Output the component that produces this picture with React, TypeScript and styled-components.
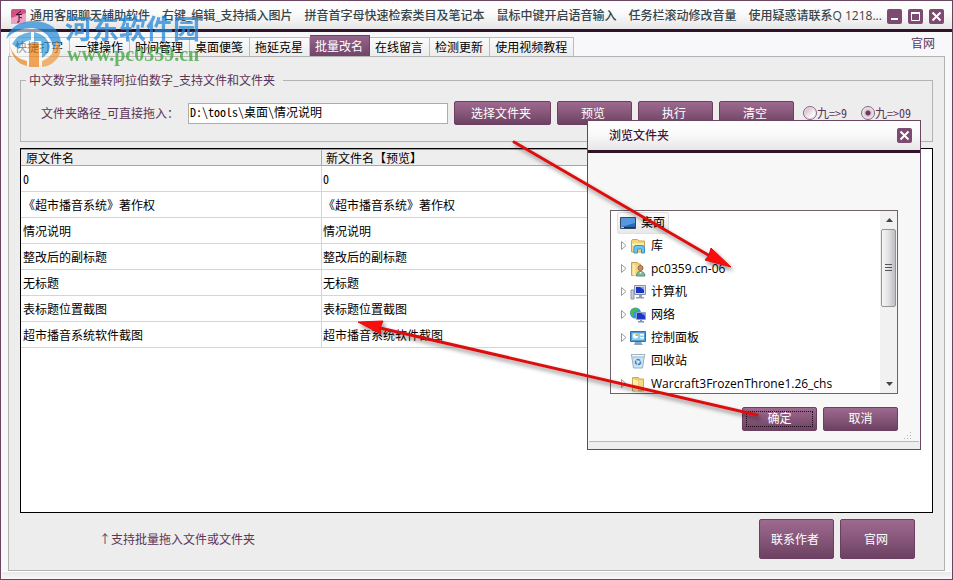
import React, { useState } from "react";
import styled, { createGlobalStyle, css } from "styled-components";

const pixelFont = `"Noto Sans Mono CJK SC", "Noto Sans CJK SC", sans-serif`;
const uiFont = `"Open Sans", "Noto Sans CJK SC", sans-serif`;
const plum = "#5c3455";
const frame = "#6b4660";

const GlobalStyle = createGlobalStyle`
  *, *::before, *::after { box-sizing: border-box; }
  body { margin: 0; font: 12px/14px ${pixelFont}; color: #000; }
  button, input { font: inherit; color: inherit; margin: 0; }
`;

const Window = styled.div`
  position: relative;
  display: flex;
  flex-direction: column;
  min-height: 100vh;
  border: 1px solid ${frame};
  background: #f8f7f9;
  overflow: hidden;
`;

const TitleBar = styled.header`
  display: flex;
  align-items: center;
  gap: 6px;
  height: 31px;
  padding: 2px 8px 0 10px;
  border-bottom: 3px solid #301329;
  background: linear-gradient(#ffffff, #fafafa 45%, #e6e6e6);
`;

const Title = styled.h1`
  flex: 1;
  min-width: 0;
  margin: 0 -5px 0 -2px;
  font: 500 12px/18px ${uiFont};
  color: #35454c;
  white-space: pre;
`;

const CaptionButton = styled.button`
  display: flex;
  flex: none;
  width: 15px;
  height: 15px;
  padding: 0;
  border: 0;
  border-radius: 2px;
  background: #7d4b72;
`;

const Nav = styled.div`
  display: flex;
  align-items: flex-end;
  justify-content: space-between;
  height: 24px;
  padding: 0 17px 0 8px;
`;

const Tabs = styled.div`
  display: flex;
  align-items: flex-end;
`;

const Tab = styled.button<{ $active?: boolean }>`
  height: 19px;
  padding: 0 6px 0 5px;
  border: 1px solid #bdbdbd;
  border-width: 1px 1px 0 0;
  background: linear-gradient(#fbfbfb, #ececec);
  line-height: 16px;
  &:first-child { border-left-width: 1px; }
  ${(p) =>
    p.$active &&
    css`
      height: 21px;
      border-color: #6c4261;
      background: linear-gradient(#95658b, #714468);
      color: #fff;
      line-height: 18px;
    `}
`;

const SiteLink = styled.a`
  align-self: flex-start;
  margin-top: 4px;
  color: ${plum};
  text-decoration: none;
`;

const Panel = styled.main`
  display: flex;
  flex: 1;
  flex-direction: column;
  margin: 0 7px 0 7px;
  padding: 16px 11px 11px;
  border: 1px solid #b3b3b3;
  background: #ededed;
`;

const Group = styled.fieldset`
  min-width: 0;
  margin: 0;
  padding: 14px 10px 16px 20px;
  border: 1px solid #b3b3b3;
`;

const Legend = styled.legend`
  margin-left: -15px;
  padding: 0 8px 0 3px;
  color: ${plum};
`;

const Controls = styled.div`
  display: flex;
  align-items: center;
  gap: 6px;
`;

const PathLabel = styled.label`
  flex: none;
  width: 141px;
  color: ${plum};
  white-space: nowrap;
`;

const PathInput = styled.input`
  flex: 0 1 260px;
  min-width: 0;
  height: 21px;
  padding: 0 2px 3px 1px;
  border: 1px solid #adadad;
  background: #fff;
`;

const ActionButton = styled.button<{ $wide?: boolean; $tall?: boolean; $focused?: boolean }>`
  flex: none;
  width: ${(p) => (p.$wide ? 97 : 75)}px;
  height: ${(p) => (p.$tall ? 40 : 24)}px;
  padding: 0 3px 0 0;
  border: 1px solid #6a3f60;
  border-radius: 2px;
  background: linear-gradient(#9e698f, #89597c 45%, #6c4162);
  color: #fff;
  ${(p) =>
    p.$focused &&
    css`
      outline: 1px dotted #1c0918;
      outline-offset: -5px;
    `}
`;

const DialogButton = styled(ActionButton)`
  padding: 0;
`;

const Radios = styled.div`
  display: flex;
  gap: 14px;
  margin-left: 3px;
`;

const RadioLabel = styled.label`
  display: flex;
  align-items: center;
  color: ${plum};
  white-space: nowrap;
`;

const Radio = styled.input`
  appearance: none;
  width: 14px;
  height: 14px;
  border: 1px solid #7e6b79;
  border-radius: 50%;
  background: linear-gradient(135deg, #c9a9c1, #fff 75%);
  box-shadow: inset 0 0 0 1px #eee3eb;
  &:checked {
    background: radial-gradient(circle, #6b3a5e 0 2px, #d9c3d2 3px, #f4ecf2 6px);
  }
`;

const ListBox = styled.div`
  flex: 1;
  margin-top: 6px;
  border: 1px solid #000;
  background: #fff;
`;

const FileTable = styled.table`
  width: 600px;
  table-layout: fixed;
  border-collapse: separate;
  border-spacing: 0;
`;

const HeadCell = styled.th`
  height: 17px;
  padding: 2px 0 0 5px;
  border-bottom: 1px solid #a6a6a6;
  background: #eee;
  box-shadow: inset 0 1px #9c9c9c;
  font-weight: 400;
  text-align: left;
  & + & { border-left: 1px solid #a6a6a6; padding-left: 4px; }
`;

const Cell = styled.td`
  height: 26px;
  padding: 1px 0 0 2px;
  border-bottom: 1px solid #d5d5d5;
  & + & { border-left: 1px solid #d5d5d5; padding-left: 1px; }
`;

const Footer = styled.footer`
  display: flex;
  align-items: center;
  gap: 6px;
  margin-top: 6px;
  padding: 0 18px 0 79px;
`;

const Hint = styled.p`
  flex: 1;
  margin: 0;
  color: ${plum};
`;

const StatusBar = styled.div`
  height: 8px;
  margin: 0 1px;
  border-top: 1px solid #fff;
  background: linear-gradient(#eaeaea, #f9f6f9);
`;

const Dialog = styled.section`
  position: absolute;
  top: 119px;
  right: 31px;
  display: flex;
  flex-direction: column;
  width: 334px;
  border: 1px solid ${frame};
  background: #f7f7f7;
  font: 12px/16px ${uiFont};
`;

const DialogBar = styled.div`
  display: flex;
  align-items: center;
  justify-content: space-between;
  height: 32px;
  padding: 0 8px 0 21px;
  border-bottom: 3px solid #301329;
  background: linear-gradient(#ffffff, #fafafa 45%, #e6e6e6);
`;

const DialogTitle = styled.h2`
  margin: 0;
  font: 500 12px/16px ${uiFont};
  color: #3f1737;
`;

const DialogBody = styled.div`
  padding: 57px 22px 0;
`;

const TreeBox = styled.div`
  display: flex;
  height: 184px;
  border: 1px solid #6e626b;
  background: #fff;
  overflow: hidden;
`;

const TreeList = styled.ul`
  flex: 1;
  margin: 0;
  padding: 0;
  list-style: none;
`;

const TreeRow = styled.li<{ $root?: boolean }>`
  display: flex;
  align-items: center;
  gap: 3px;
  height: 23px;
  padding-left: ${(p) => (p.$root ? 6 : 10)}px;
`;

const Expander = styled.svg`
  flex: none;
  width: 6px;
  height: 9px;
`;

const TreeIcon = styled.svg`
  flex: none;
  width: 16px;
  height: 16px;
`;

const TreeName = styled.span`
  padding-left: 2px;
  white-space: nowrap;
`;

const RootItem = styled.div`
  display: flex;
  align-items: center;
  gap: 3px;
  height: 22px;
  padding: 0 3px 0 2px;
  border: 1px solid #e0e0e0;
  border-radius: 2px;
  background: linear-gradient(#fafafa, #e9e9e9);
`;

const ScrollTrack = styled.div`
  display: flex;
  flex-direction: column;
  align-items: center;
  width: 17px;
  background: #f1f1f1;
`;

const ScrollArrow = styled.svg`
  flex: none;
  width: 16px;
  height: 18px;
`;

const ScrollThumb = styled.div`
  display: flex;
  align-items: center;
  justify-content: center;
  width: 15px;
  height: 78px;
  margin-bottom: auto;
  border: 1px solid #959595;
  border-radius: 2px;
  background: linear-gradient(90deg, #f6f6f6, #e4e4e4 45%, #bdbec2);
`;

const DialogActions = styled.div`
  display: flex;
  justify-content: flex-end;
  gap: 6px;
  padding-top: 13px;
`;

const DialogStatus = styled.div`
  display: flex;
  justify-content: flex-end;
  height: 11px;
  margin: 0 1px;
  padding-right: 6px;
  border-bottom: 1px solid #bbb;
`;

const DialogEdge = styled.div`
  height: 7px;
  background: #eee;
`;

const Arrows = styled.svg`
  position: absolute;
  top: -1px;
  right: -1px;
  width: 953px;
  height: 580px;
  pointer-events: none;
`;

const Watermark = styled.div`
  position: absolute;
  top: 9px;
  left: 3px;
  display: flex;
  gap: 1px;
  opacity: 0.74;
  pointer-events: none;
`;

const WatermarkText = styled.div`
  display: flex;
  flex-direction: column;
  padding-top: 3px;
  white-space: nowrap;
`;

const WatermarkName = styled.span`
  font: 700 27px/30px "Noto Sans CJK SC", sans-serif;
  color: #2387d8;
`;

const WatermarkSite = styled.span`
  padding-left: 2px;
  font: 700 20px/23px "Liberation Serif", serif;
  color: #3ca53c;
`;

const tabs = ["快捷打字", "一键操作", "时间管理", "桌面便笺", "拖延克星", "批量改名", "在线留言", "检测更新", "使用视频教程"];

const files = ["0", "《超市播音系统》著作权", "情况说明", "整改后的副标题", "无标题", "表标题位置截图", "超市播音系统软件截图"];

type IconKind = "desktop" | "library" | "user" | "computer" | "network" | "control" | "bin" | "folder";

const iconArt: Record<IconKind, React.ReactNode> = {
  desktop: (
    <>
      <path d="M0.5 2.5h15v11h-15z" fill="#2868b4" stroke="#36485c" />
      <path d="M1 3h14v5L1 12z" fill="#5698dc" />
      <path d="M1 12h14v1H1z" fill="#1b3858" />
      <path d="M1 12h3v1H1z" fill="#9ed7f4" />
    </>
  ),
  library: (
    <>
      <path d="M1.5 3l1-1.5h5L9 3h5.5v11h-13z" fill="#f3d77b" stroke="#cba549" />
      <path d="M2 5.5h12v2H2z" fill="#fff1b8" />
      <path d="M4 15V9.500q0-2 2-2h6q2.500 0 2.500 2.500v5h-3v-4h-4v4z" fill="#6cc4ec" stroke="#3993c9" />
    </>
  ),
  user: (
    <>
      <path d="M1.5 1.500h6l1 1.500h2v11.500h-9z" fill="#f0d37c" stroke="#c8a24c" />
      <path d="M2.500 3v11l3 1.500V4.500z" fill="#fbe9a7" />
      <circle cx="10.500" cy="7" r="2.500" fill="#c58e68" stroke="#93684a" />
      <path d="M6.500 15q0-4.500 4-4.500t4.500 4.500z" fill="#7fbc9c" stroke="#588d78" />
      <path d="M9.500 11l1 2 1-2z" fill="#fff" />
    </>
  ),
  computer: (
    <>
      <path d="M1 6h3v9H1z" fill="#c9ced6" stroke="#8b95a3" />
      <path d="M4.500 1.500h11v9h-11z" fill="#d5dbe8" stroke="#8792a8" />
      <path d="M6 3h8v6H6z" fill="#1c35c4" />
      <path d="M10 3h4v3z" fill="#7ba2f4" />
      <path d="M9 11h3v2h2v1.500H6V13h3z" fill="#939eb0" />
    </>
  ),
  network: (
    <>
      <circle cx="5.500" cy="6" r="5.500" fill="#3297dc" />
      <path d="M2 2q4-2 6 0L6 5 3 5 4 8 2 9 0 5zM6 7l3 1-3 3z" fill="#46ba4c" />
      <path d="M6.500 5.500h9v7h-9z" fill="#1c35c4" stroke="#8ea2c4" />
      <path d="M11 6h4v3z" fill="#6c93f1" />
      <path d="M10 13h2v1h2v1.500H8V14h2z" fill="#8290aa" />
    </>
  ),
  control: (
    <>
      <path d="M0.500 1.500h15v10h-15z" fill="#4e9fd5" stroke="#386f9f" />
      <path d="M2 3h12v7H2z" fill="#8fcdec" />
      <circle cx="5.500" cy="6" r="2.500" fill="#fff" />
      <path d="M5.500 6V3.500A2.500 2.500 0 0 1 8 6z" fill="#e0ad35" />
      <path d="M10 4h4v1.500h-4zM10 7h4v1.500h-4z" fill="#fff" />
      <path d="M5 12h6l2 3H4z" fill="#8ba6bc" />
    </>
  ),
  bin: (
    <>
      <path d="M1.500 2l2 13h9l2-13z" fill="#cfe3f0" stroke="#94b1c7" />
      <path d="M1 1.500h14l-1 2.500H2z" fill="#edf6fb" stroke="#9db8ca" />
      <circle cx="8" cy="9" r="2.500" fill="none" stroke="#397fc3" strokeWidth="1.500" strokeDasharray="4 1" />
    </>
  ),
  folder: (
    <>
      <path d="M2.500 1.500h6l1 1.500h4v12h-11z" fill="#edcd70" stroke="#cfaa52" />
      <path d="M3 3l5 2v11l-5-2z" fill="#fff0ae" />
      <path d="M9 4h4v10H9z" fill="#f6dc87" />
    </>
  ),
};

const entries: { name: string; icon: IconKind; leaf?: boolean }[] = [
  { name: "库", icon: "library" },
  { name: "pc0359.cn-06", icon: "user" },
  { name: "计算机", icon: "computer" },
  { name: "网络", icon: "network" },
  { name: "控制面板", icon: "control" },
  { name: "回收站", icon: "bin", leaf: true },
  { name: "Warcraft3FrozenThrone1.26_chs", icon: "folder" },
];

function Glyph({ kind }: { kind: "min" | "max" | "close" }) {
  return (
    <svg width="15" height="15" viewBox="0 0 15 15" fill="none" stroke="#fff" strokeWidth="2">
      {kind === "min" && <path d="M4 10h7" />}
      {kind === "max" && (
        <>
          <path d="M3.500 4v7.500h8V4" strokeWidth="1" />
          <path d="M3 4h9" />
        </>
      )}
      {kind === "close" && <path d="M3.500 3.500l8 8M11.500 3.500l-8 8" />}
    </svg>
  );
}

function FolderDialog() {
  return (
    <Dialog role="dialog" aria-labelledby="dialog-title">
      <DialogBar>
        <DialogTitle id="dialog-title">浏览文件夹</DialogTitle>
        <CaptionButton aria-label="关闭对话框">
          <Glyph kind="close" />
        </CaptionButton>
      </DialogBar>
      <DialogBody>
        <TreeBox>
          <TreeList>
            <TreeRow $root>
              <RootItem>
                <TreeIcon viewBox="0 0 16 16">{iconArt.desktop}</TreeIcon>
                <TreeName>桌面</TreeName>
              </RootItem>
            </TreeRow>
            {entries.map((e) => (
              <TreeRow key={e.name}>
                <Expander viewBox="0 0 6 9">
                  {!e.leaf && <path d="M0.500 0.500v8L5 4.500z" fill="#fff" stroke="#999" />}
                </Expander>
                <TreeIcon viewBox="0 0 16 16">{iconArt[e.icon]}</TreeIcon>
                <TreeName>{e.name}</TreeName>
              </TreeRow>
            ))}
          </TreeList>
          <ScrollTrack>
            <ScrollArrow viewBox="0 0 16 18">
              <path d="M5 11h7L8.500 7z" fill="#444" />
            </ScrollArrow>
            <ScrollThumb>
              <svg width="7" height="9" stroke="#555">
                <path d="M0 0.500h7M0 3.500h7M0 6.500h7" />
              </svg>
            </ScrollThumb>
            <ScrollArrow viewBox="0 0 16 18">
              <path d="M5 7h7L8.500 11z" fill="#444" />
            </ScrollArrow>
          </ScrollTrack>
        </TreeBox>
        <DialogActions>
          <DialogButton $focused>确定</DialogButton>
          <DialogButton>取消</DialogButton>
        </DialogActions>
      </DialogBody>
      <DialogStatus>
        <svg width="10" height="10" fill="#b5b5b5">
          <path d="M7 1h1v1H7zM4 4h1v1H4zM7 4h1v1H7zM1 7h1v1H1zM4 7h1v1H4zM7 7h1v1H7z" />
        </svg>
      </DialogStatus>
      <DialogEdge />
    </Dialog>
  );
}

export default function App() {
  const [path, setPath] = useState("D:\\tools\\桌面\\情况说明");
  const [mode, setMode] = useState("09");
  return (
    <Window>
      <GlobalStyle />
      <TitleBar>
        <svg width="15" height="15" viewBox="0 0 15 15">
          <rect width="15" height="15" rx="2" fill="#d84f86" />
          <path d="M0 15V9L15 4v11z" fill="#eda0c0" />
          <path d="M10 2L6 5M5 5.500h6M8 5.500V13H6M8 8l3 1" fill="none" stroke="#46152f" />
        </svg>
        <Title>
          通用客服聊天辅助软件　右键_编辑_支持插入图片　拼音首字母快速检索类目及笔记本　鼠标中键开启语音输入　任务栏滚动修改音量　使用疑惑请联系Q 1218...
        </Title>
        <CaptionButton aria-label="最小化">
          <Glyph kind="min" />
        </CaptionButton>
        <CaptionButton aria-label="最大化">
          <Glyph kind="max" />
        </CaptionButton>
        <CaptionButton aria-label="关闭">
          <Glyph kind="close" />
        </CaptionButton>
      </TitleBar>
      <Nav>
        <Tabs role="tablist">
          {tabs.map((t) => (
            <Tab key={t} role="tab" aria-selected={t === "批量改名"} $active={t === "批量改名"}>
              {t}
            </Tab>
          ))}
        </Tabs>
        <SiteLink href="#">官网</SiteLink>
      </Nav>
      <Panel>
        <Group>
          <Legend>中文数字批量转阿拉伯数字_支持文件和文件夹</Legend>
          <Controls>
            <PathLabel htmlFor="path">文件夹路径_可直接拖入：</PathLabel>
            <PathInput id="path" value={path} onChange={(e) => setPath(e.target.value)} />
            <ActionButton $wide>选择文件夹</ActionButton>
            <ActionButton>预览</ActionButton>
            <ActionButton>执行</ActionButton>
            <ActionButton>清空</ActionButton>
            <Radios>
              {["9", "09"].map((m) => (
                <RadioLabel key={m}>
                  <Radio type="radio" name="mode" checked={mode === m} onChange={() => setMode(m)} />
                  {"九=>" + m}
                </RadioLabel>
              ))}
            </Radios>
          </Controls>
        </Group>
        <ListBox>
          <FileTable>
            <thead>
              <tr>
                <HeadCell>原文件名</HeadCell>
                <HeadCell>新文件名【预览】</HeadCell>
              </tr>
            </thead>
            <tbody>
              {files.map((f) => (
                <tr key={f}>
                  <Cell>{f}</Cell>
                  <Cell>{f}</Cell>
                </tr>
              ))}
            </tbody>
          </FileTable>
        </ListBox>
        <Footer>
          <Hint>↑支持批量拖入文件或文件夹</Hint>
          <ActionButton $tall>联系作者</ActionButton>
          <ActionButton $tall>官网</ActionButton>
        </Footer>
      </Panel>
      <StatusBar />
      <FolderDialog />
      <Arrows viewBox="0 0 953 580">
        <defs>
          <filter id="shadow" x="-10%" y="-10%" width="120%" height="130%">
            <feDropShadow dx="2" dy="3" stdDeviation="2" floodColor="#000" floodOpacity="0.45" />
          </filter>
        </defs>
        <g filter="url(#shadow)" fill="#fb0d0d" stroke="#dc1010">
          <path d="M514 142L710 256" strokeWidth="3" strokeLinecap="round" />
          <path d="M711 248L731 267L705 260L709 255z" />
          <path d="M757 415L380 328" strokeWidth="3" strokeLinecap="round" />
          <path d="M358 322L383 321L380 328L381 334z" />
        </g>
      </Arrows>
      <Watermark aria-hidden="true">
        <svg width="60" height="60" viewBox="0 0 60 60">
          <ellipse cx="30" cy="34" rx="27" ry="22" fill="#fff" fillOpacity="0.75" />
          <path d="M2 29Q8 11 30 11Q54 12 57 32Q56 44 46 50Q52 38 46 29Q40 19 28 18Q12 18 2 29z" fill="#2b8fd9" />
          <path d="M8 34Q14 23 27 22V30Q18 31 15 39z" fill="#3e9edb" />
          <path d="M30 22Q42 24 46 36Q45 44 38 48V31H30z" fill="#3e9edb" />
          <path d="M6 36Q9 48 23 51V56Q9 53 6 36z" fill="#ee8b27" />
          <path d="M25 33H35V57H25z" fill="#ef8a22" />
          <path d="M38 51Q51 46 52 31Q59 37 55 46Q49 56 38 57z" fill="#f29d45" />
        </svg>
        <WatermarkText>
          <WatermarkName>河东软件园</WatermarkName>
          <WatermarkSite>www.pc0359.cn</WatermarkSite>
        </WatermarkText>
      </Watermark>
    </Window>
  );
}
